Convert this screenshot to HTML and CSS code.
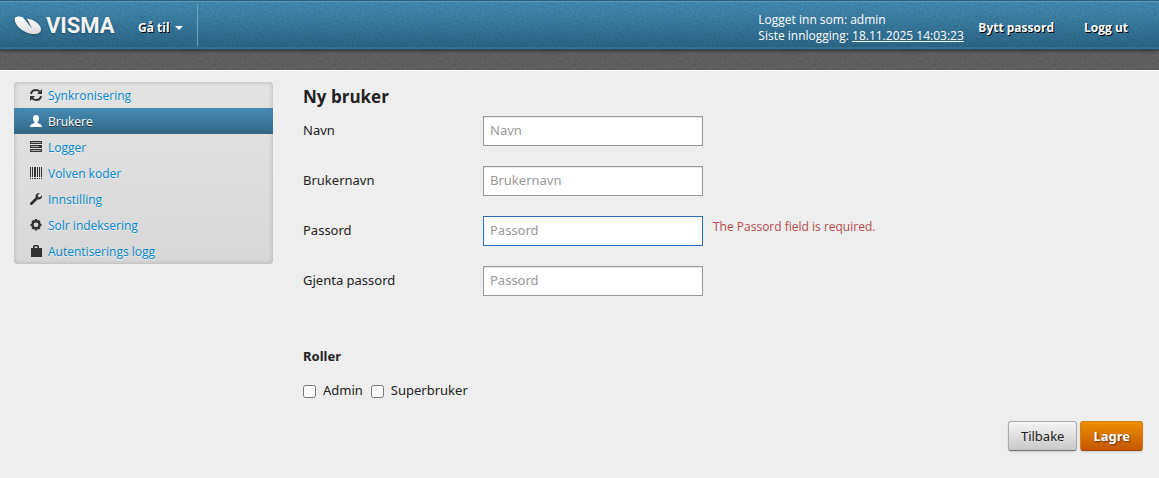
FILE: index.html
```html
<!DOCTYPE html>
<html lang="no">
<head>
    <meta charset="UTF-8">
    <meta name="viewport" content="width=device-width, initial-scale=1.0">
    <title>Ny bruker</title>
    <link rel="stylesheet" href="styles.css">
</head>
<body>
    <header class="navbar">
        <a class="brand" href="#">
            <svg class="brand-mark" width="28" height="20" viewBox="0 0 28 20" aria-hidden="true">
                <defs>
                    <linearGradient id="mark" x1="0" y1="0" x2="0" y2="1">
                        <stop offset="0" stop-color="#fff"/>
                        <stop offset="1" stop-color="#dcdcdc"/>
                    </linearGradient>
                </defs>
                <path fill="url(#mark)" d="M1 2C2 0 6 0 9 1.500L18 12.500L13 2.500C19 3 27 8 27 13.500C27 17 23 18.500 18.500 18C9 17 -1 8 1 2Z"/>
            </svg>
            <span class="brand-name">VISMA</span>
        </a>
        <button class="nav-menu" type="button">Gå til <span class="caret"></span></button>
        <div class="nav-right">
            <div class="login-info">
                Logget inn som: admin<br>
                Siste innlogging: <a href="#">18.11.2025 14:03:23</a>
            </div>
            <a class="nav-link" href="#">Bytt passord</a>
            <a class="nav-link" href="#">Logg ut</a>
        </div>
    </header>
    <div class="subbar"></div>

    <div class="container">
        <nav class="sidebar">
            <a href="#">
                <svg viewBox="0 0 14 14"><path class="line" d="M2 6C2.500 3 4.500 2 7 2C9 2 10.500 3 11.500 4.500M12 8C11.500 11 9.500 12 7 12C5 12 3.500 11 2.500 9.500"/><path d="M13 1V6H8ZM1 13V8H6Z"/></svg>
                Synkronisering
            </a>
            <a class="active" href="#">
                <svg viewBox="0 0 14 14"><path d="M7 1C9 1 10 2.500 10 4.500C10 6 9.500 7 8.500 8V9C11 10 13 10.300 13 13H1C1 10.300 3 10 5.500 9V8C4.500 7 4 6 4 4.500C4 2.500 5 1 7 1Z"/></svg>
                Brukere
            </a>
            <a href="#">
                <svg viewBox="0 0 14 14"><path d="M1 1H13V4H1ZM1 5H13V8H1ZM1 9H13V12H1Z"/><path class="slot" d="M2 2.500H12M2 6.500H10M2 10.500H12"/></svg>
                Logger
            </a>
            <a href="#">
                <svg viewBox="0 0 14 14"><path d="M1 1H2V11H1ZM3 1H4V11H3ZM5 1H7V11H5ZM8 1H9V11H8ZM10 1H11V11H10ZM12 1H13V11H12ZM1 12H2V13H1ZM3 12H4V13H3ZM5 12H7V13H5ZM8 12H9V13H8ZM10 12H11V13H10ZM12 12H13V13H12Z"/></svg>
                Volven koder
            </a>
            <a href="#">
                <svg viewBox="0 0 14 14"><path d="M10.800 1L8.800 3.200L9.300 5L11 5.300L13 3.300C13.500 6 11.500 8 8.500 7.400L3.500 12.500C2 14 0 12 1.500 10.500L6.600 5.500C6 3 8 .500 10.800 1Z"/></svg>
                Innstilling
            </a>
            <a href="#">
                <svg viewBox="0 0 14 14"><path fill-rule="evenodd" d="M6 1H8L8.500 2.600L10 2L11.500 3.500L10.900 5L12.500 6V8L10.900 8.500L11.500 10L10 11.500L8.500 10.900L8 12.500H6L5.500 10.900L4 11.500L2.500 10L3.100 8.500L1.500 8V6L3.100 5.300L2.500 3.500L4 2L5.500 2.600ZM7 4.500A2.300 2.300 0 1 0 7 9.100A2.300 2.300 0 1 0 7 4.500Z"/></svg>
                Solr indeksering
            </a>
            <a href="#">
                <svg viewBox="0 0 14 14"><path fill-rule="evenodd" d="M4 4V2L5 1H9L10 2V4H13V13H2V4ZM5.500 4H8.500V2.500H5.500Z"/></svg>
                Autentiserings logg
            </a>
        </nav>

        <main class="content">
            <form>
                <h1>Ny bruker</h1>
                <div class="control-group">
                    <label for="name">Navn</label>
                    <input type="text" id="name" placeholder="Navn">
                </div>
                <div class="control-group">
                    <label for="username">Brukernavn</label>
                    <input type="text" id="username" placeholder="Brukernavn">
                </div>
                <div class="control-group">
                    <label for="password">Passord</label>
                    <input class="invalid" type="password" id="password" placeholder="Passord">
                    <span class="error">The Passord field is required.</span>
                </div>
                <div class="control-group">
                    <label for="password2">Gjenta passord</label>
                    <input type="password" id="password2" placeholder="Passord">
                </div>

                <h2>Roller</h2>
                <div class="roles">
                    <input type="checkbox" id="admin"><label for="admin">Admin</label>
                    <input type="checkbox" id="superuser"><label for="superuser">Superbruker</label>
                </div>

                <div class="form-actions">
                    <button class="btn" type="button">Tilbake</button>
                    <button class="btn btn-primary" type="submit">Lagre</button>
                </div>
            </form>
        </main>
    </div>
</body>
</html>
```
FILE: styles.css
```css
* {
    box-sizing: border-box;
}
body {
    margin: 0;
    background-color: #eee;
    color: #222;
    font-family: "Noto Sans", "Open Sans", sans-serif;
    font-size: 13px;
    line-height: 20px;
}
/* Header */
.navbar {
    display: flex;
    align-items: center;
    height: 50px;
    padding: 0 16px 0 14px;
    /* fine grain over the blue gradient */
    background-image: url("data:image/svg+xml,%3Csvg xmlns='http://www.w3.org/2000/svg' width='120' height='120'%3E%3Cfilter id='n'%3E%3CfeTurbulence type='fractalNoise' baseFrequency='.4' numOctaves='2' stitchTiles='stitch'/%3E%3CfeColorMatrix values='0 0 0 0 0 0 0 0 0 0 0 0 0 0 0 .2 0 0 0 -.06'/%3E%3C/filter%3E%3Crect width='120' height='120' filter='url(%23n)'/%3E%3C/svg%3E"), linear-gradient(#448db5, #2b6587);
    border-top: 1px solid #2a617f;
    border-bottom: 1px solid #21495f;
    box-shadow: inset 0 1px #5b9cbd, inset 0 -2px #35708f, 0 1px 3px #333;
    position: relative;
    color: #fff;
    font-family: "Open Sans", "Noto Sans", sans-serif;
    font-size: 12px;
    line-height: 16px;
}
.brand {
    display: flex;
    align-items: center;
    gap: 4px;
    width: 108px;
    padding-top: 2px;
    color: #f4f4f4;
    text-decoration: none;
}
.brand-mark {
    flex: none;
    filter: drop-shadow(0 1px 1px #1e4c66);
}
.brand-name {
    font-family: Roboto, sans-serif;
    font-size: 22px;
    font-weight: bold;
    line-height: 28px;
    text-shadow: 0 1px 2px #1e4c66;
}
.nav-menu {
    display: flex;
    align-items: center;
    gap: 5px;
    height: 42px;
    padding: 6px 14px 0 16px;
    background: none;
    border: 0;
    border-right: 1px solid #6fa3c0;
    color: #fff;
    font: bold 12px/20px "Open Sans", sans-serif;
    text-shadow: 1px 1px #000;
}
.caret {
    border: 4px solid transparent;
    border-top-color: #fff;
    border-bottom: 0;
}
.nav-right {
    display: flex;
    align-items: center;
    gap: 30px;
    margin-left: auto;
    padding: 6px 15px 0 0;
}
.login-info {
    width: 190px;
    white-space: nowrap;
}
.login-info a {
    color: #fff;
}
.nav-link {
    color: #fff;
    font-weight: bold;
    text-decoration: none;
    text-shadow: 1px 1px #000;
}
.subbar {
    height: 21px;
    background: url("data:image/svg+xml,%3Csvg xmlns='http://www.w3.org/2000/svg' width='120' height='120'%3E%3Cfilter id='n'%3E%3CfeTurbulence type='fractalNoise' baseFrequency='.4' numOctaves='2' stitchTiles='stitch'/%3E%3CfeColorMatrix values='0 0 0 0 0 0 0 0 0 0 0 0 0 0 0 .2 0 0 0 -.06'/%3E%3C/filter%3E%3Crect width='120' height='120' filter='url(%23n)'/%3E%3C/svg%3E") #626262;
    border-bottom: 1px solid #fff;
}
/* Page */
.container {
    display: flex;
    align-items: flex-start;
    gap: 30px;
    padding: 11px 16px 24px 14px;
}
.sidebar {
    flex: none;
    width: 259px;
    background: linear-gradient(#e3e3e3, #d8d8d8);
    border-radius: 4px;
    box-shadow: inset 0 0 5px #b0b0b0;
    font-family: "Open Sans", "Noto Sans", sans-serif;
    font-size: 12px;
    overflow: hidden;
}
.sidebar a {
    display: flex;
    align-items: center;
    gap: 5px;
    padding: 4px 15px 2px;
    color: #08c;
    text-decoration: none;
    text-shadow: 0 1px #eee;
}
.sidebar svg {
    width: 14px;
    height: 14px;
    margin-bottom: 2px;
    fill: #333;
}
.sidebar .line {
    fill: none;
    stroke: #333;
    stroke-width: 2;
}
.sidebar .slot {
    stroke: #aaa;
}
.sidebar .active {
    background: linear-gradient(#468ab2, #326786);
    color: #fff;
    text-shadow: 0 1px #333;
}
.sidebar .active svg {
    fill: #fff;
}
.content {
    flex: 1;
}
h1 {
    margin: 0;
    padding: 3px 0 7px;
    font-family: "Open Sans", "Noto Sans", sans-serif;
    font-size: 17px;
    line-height: 24px;
}
.control-group {
    display: flex;
    height: 50px;
}
.control-group label {
    width: 180px;
    padding-top: 4px;
}
.control-group input {
    width: 220px;
    height: 30px;
    padding: 0 6px 2px;
    background-color: #fff;
    border: 1px solid #999;
    box-shadow: inset 0 1px 1px #e5e5e5;
    color: #333;
    font: inherit;
}
.control-group .invalid {
    border-color: #2a6fb9;
    box-shadow: none;
}
input::placeholder {
    color: #999;
    opacity: 1;
}
.error {
    padding: 1px 10px;
    color: #b94a48;
    font-family: "Open Sans", "Noto Sans", sans-serif;
    font-size: 12px;
}
h2 {
    margin: 30px 0 14px;
    font-size: 13px;
    line-height: 20px;
}
.roles {
    display: flex;
    align-items: center;
}
.roles input {
    width: 13px;
    height: 13px;
    margin: 2px 7px 0 0;
}
.roles label {
    margin-right: 8px;
}
.form-actions {
    display: flex;
    justify-content: flex-end;
    gap: 3px;
    margin-top: 21px;
}
.btn {
    height: 30px;
    padding: 0 12px;
    background: linear-gradient(#f5f5f5, #c8c8c8);
    border: 1px solid #aaa;
    border-bottom-color: #777;
    border-radius: 3px;
    box-shadow: 0 1px 2px #ccc;
    color: #222;
    font: 13px/20px "Noto Sans", sans-serif;
}
.btn-primary {
    background: linear-gradient(#ee8f00, #c45800);
    border-color: #d57d18;
    border-bottom-color: #a34c00;
    color: #fff;
    font-weight: bold;
    text-shadow: 1px 1px 2px #5c2c00;
}
```
